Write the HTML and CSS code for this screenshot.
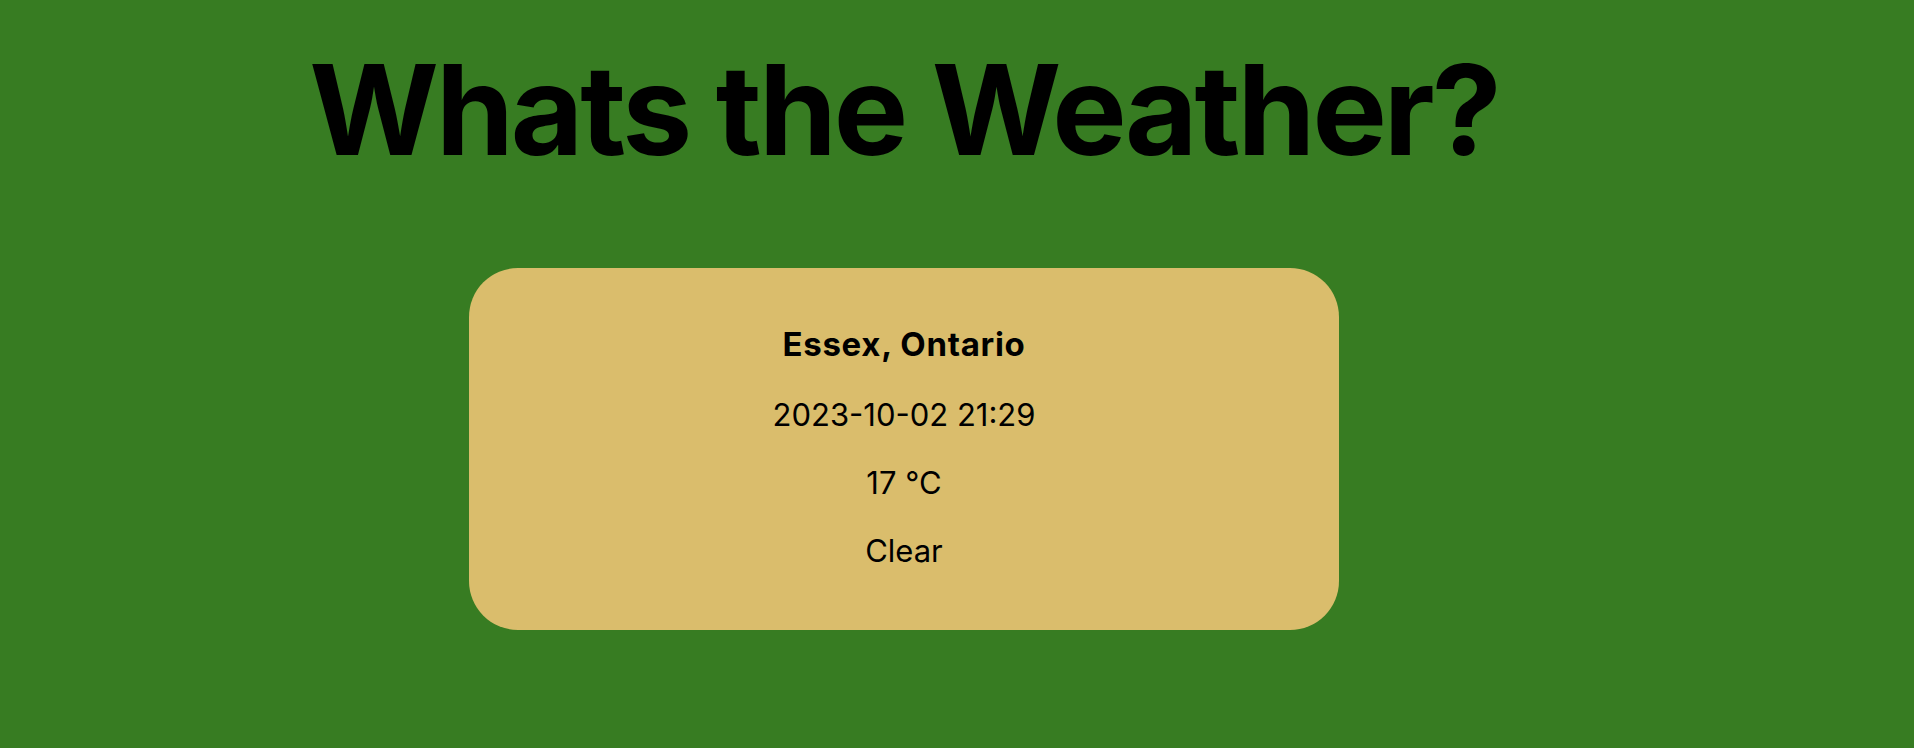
FILE: index.html
```html
<!DOCTYPE html>
<html lang="en">
<head>
<meta charset="utf-8">
<title>Whats the Weather?</title>
<link rel="stylesheet" href="styles.css">
</head>
<body>
<main class="page">
  <h1 class="title">Whats the Weather?</h1>
  <section class="card">
    <h2 class="city">Essex, Ontario</h2>
    <p class="line">2023-10-02 21:29</p>
    <p class="line">17 °C</p>
    <p class="line">Clear</p>
  </section>
</main>
</body>
</html>
```
FILE: styles.css
```css
html, body {
  margin: 0;
  padding: 0;
  background: #377c22;
  height: 100%;
}
body {
  font-family: Inter, "Noto Sans", sans-serif;
  color: #000;
}
.page {
  width: 1808px;
  display: flex;
  flex-direction: column;
  align-items: center;
}
.title {
  margin: 35px 0 0;
  font-size: 125px;
  font-weight: 700;
  line-height: 149px;
  letter-spacing: -3px;
}
.card {
  margin-top: 84px;
  width: 870px;
  height: 362px;
  box-sizing: border-box;
  background: #dabd6c;
  border-radius: 49px;
  padding-top: 56px;
  display: flex;
  flex-direction: column;
  align-items: center;
}
.city {
  margin: 0;
  font-size: 33px;
  font-weight: 700;
  line-height: 40px;
  letter-spacing: 0.7px;
}
.line {
  margin: 32px 0 0;
  font-size: 31px;
  font-weight: 400;
  line-height: 37px;
}
.line + .line {
  margin-top: 31px;
}
```
